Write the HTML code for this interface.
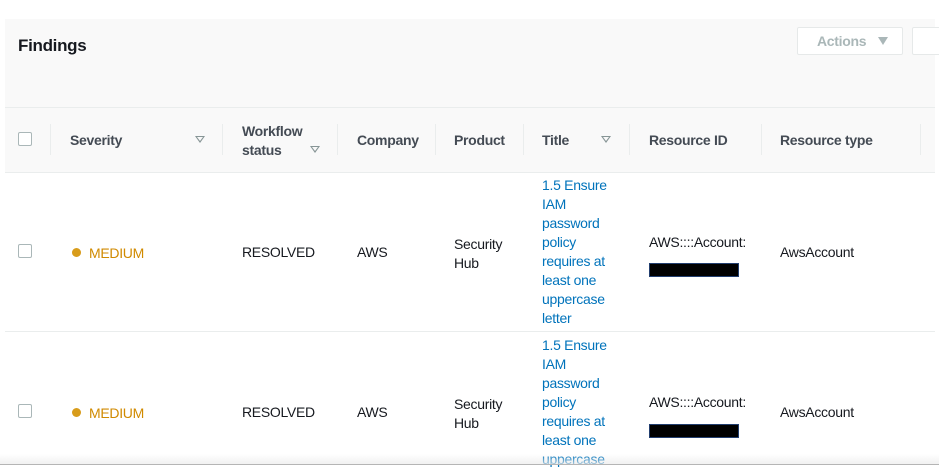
<!DOCTYPE html>
<html><head><meta charset="utf-8"><style>
body{margin:0;width:939px;height:466px;background:#fff;position:relative;overflow:hidden;font-family:"Liberation Sans",sans-serif;font-size:14px;color:#16191f;letter-spacing:-0.3px}
.a{position:absolute;white-space:nowrap}
.panel{position:absolute;left:5px;top:19px;width:930px;height:88px;background:#f9f9f9}
.hdr{position:absolute;left:5px;top:107px;width:930px;height:64px;background:#f9f9f9;border-top:1px solid #eaeded;border-bottom:1px solid #eaeded}
.sep{position:absolute;top:124px;width:1px;height:31px;background:#eaeded}
.h{position:absolute;font-weight:bold;color:#444b54;font-size:14px}
.cb{position:absolute;width:12px;height:12px;border:1px solid #aab7b8;border-radius:2px;background:#fff}
.tri{position:absolute;width:0;height:0;border-left:5px solid transparent;border-right:5px solid transparent;border-top:7px solid #879596}
.tri:after{content:"";position:absolute;left:-3px;top:-6px;border-left:3px solid transparent;border-right:3px solid transparent;border-top:4px solid #f9f9f9}
.t{position:absolute;color:#0073bb;line-height:19px;font-size:14px}
.box{position:absolute;width:88px;height:12px;background:#000;border:1px solid #223e6e}
.dot{position:absolute;width:9px;height:9px;border-radius:50%;background:#d89c1b}
.med{color:#d08a00}
</style></head><body>
<div class="panel"></div>
<div class="a" style="left:18px;top:36px;font-size:17px;font-weight:bold">Findings</div>
<div class="a" style="left:797px;top:27px;width:104px;height:26px;border:1px solid #e6e9e9;background:#fff;border-radius:2px;color:#aab7b8;font-weight:bold;font-size:14px;line-height:26px;text-indent:19px">Actions <span style="display:inline-block;margin-left:8px;border-left:5px solid transparent;border-right:5px solid transparent;border-top:8px solid #aab7b8;vertical-align:1px;text-indent:0"></span></div>
<div class="a" style="left:912px;top:27px;width:40px;height:26px;border:1px solid #e6e9e9;background:#fff;border-radius:2px"></div>
<div class="hdr"></div>
<div class="cb" style="left:18px;top:132px"></div>
<div class="sep" style="left:50px"></div><div class="sep" style="left:222px"></div><div class="sep" style="left:337px"></div><div class="sep" style="left:435px"></div><div class="sep" style="left:523px"></div><div class="sep" style="left:629px"></div><div class="sep" style="left:761px"></div><div class="sep" style="left:920px"></div>
<div class="h" style="left:70px;top:132px">Severity</div><div class="tri" style="left:195px;top:136px"></div>
<div class="h" style="left:242px;top:122px;line-height:19px">Workflow<br>status</div><div class="tri" style="left:310px;top:146px"></div>
<div class="h" style="left:357px;top:132px">Company</div>
<div class="h" style="left:454px;top:132px">Product</div>
<div class="h" style="left:542px;top:132px">Title</div><div class="tri" style="left:601px;top:136px"></div>
<div class="h" style="left:649px;top:132px">Resource ID</div>
<div class="h" style="left:780px;top:132px">Resource type</div>

<div class="a" style="left:5px;top:331px;width:930px;height:1px;background:#eaeded"></div>

<div class="cb" style="left:18px;top:244px"></div>
<div class="dot" style="left:72px;top:248px"></div><div class="a med" style="left:89px;top:245px">MEDIUM</div>
<div class="a" style="left:242px;top:244px">RESOLVED</div>
<div class="a" style="left:357px;top:244px">AWS</div>
<div class="a" style="left:454px;top:235px;line-height:19px">Security<br>Hub</div>
<div class="t" style="left:542px;top:176px">1.5 Ensure<br>IAM<br>password<br>policy<br>requires at<br>least one<br>uppercase<br>letter</div>
<div class="a" style="left:649px;top:234px">AWS::::Account:</div>
<div class="box" style="left:649px;top:263px"></div>
<div class="a" style="left:780px;top:244px">AwsAccount</div>

<div class="cb" style="left:18px;top:404px"></div>
<div class="dot" style="left:72px;top:408px"></div><div class="a med" style="left:89px;top:405px">MEDIUM</div>
<div class="a" style="left:242px;top:404px">RESOLVED</div>
<div class="a" style="left:357px;top:404px">AWS</div>
<div class="a" style="left:454px;top:395px;line-height:19px">Security<br>Hub</div>
<div class="t" style="left:542px;top:336px">1.5 Ensure<br>IAM<br>password<br>policy<br>requires at<br>least one<br>uppercase</div>
<div class="a" style="left:649px;top:394px">AWS::::Account:</div>
<div class="box" style="left:649px;top:424px"></div>
<div class="a" style="left:780px;top:404px">AwsAccount</div>

<div class="a" style="left:0;top:454px;width:939px;height:10px;background:linear-gradient(rgba(245,245,245,0),rgba(235,235,235,.7))"></div>
<div class="a" style="left:0;top:464px;width:939px;height:1px;background:#b5b5b5"></div>
</body></html>
